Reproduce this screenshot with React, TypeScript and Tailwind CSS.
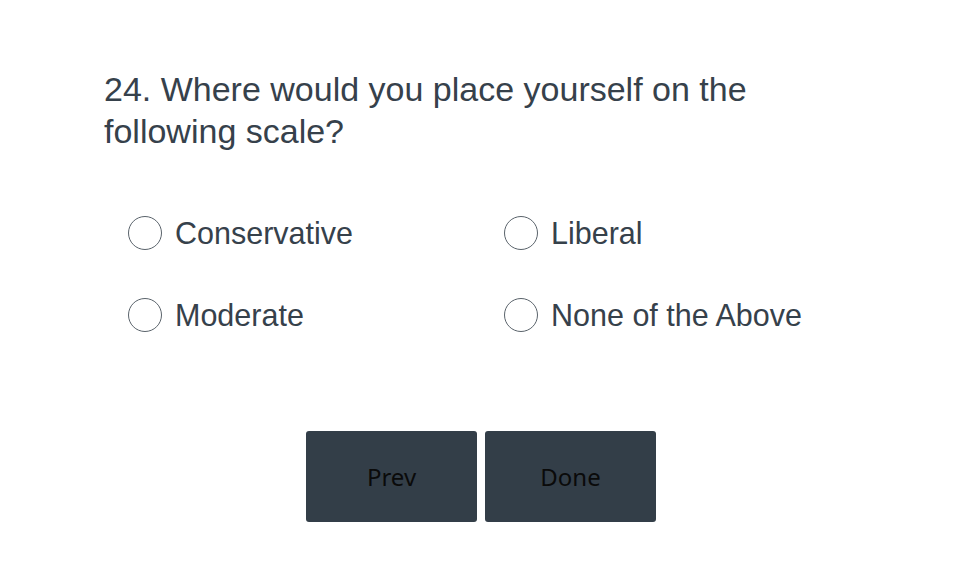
import React from "react";

const options = ["Conservative", "Liberal", "Moderate", "None of the Above"];

export default function App() {
  return (
    <div className="w-[958px] h-[574px] bg-white text-[#36414b]" style={{ fontFamily: '"Liberation Sans", Arial, sans-serif' }}>
      <div className="pl-[104px] pt-[68px]">
        <h1 className="text-[34px] leading-[42px] font-normal w-[720px]">
          24. Where would you place yourself on the following scale?
        </h1>
        <div className="mt-[64px] ml-[24px] grid grid-cols-2 w-[752px] gap-y-[48px]">
          {options.map((o) => (
            <label key={o} className="flex items-center h-[34px] gap-[13px] cursor-pointer">
              <span className="w-[34px] h-[34px] rounded-full border-[1.5px] border-[#5a636b] bg-white shrink-0" />
              <span className="text-[30.5px] leading-[34px]">{o}</span>
            </label>
          ))}
        </div>
      </div>
      <div className="flex justify-center gap-[8px] mt-[99px] pl-[4px]">
        <button className="w-[171px] h-[91px] rounded-[3px] bg-[#333e48] text-[#0a0a0a] text-[24px] leading-[28px]" style={{ fontFamily: '"Noto Sans", sans-serif' }}>
          Prev
        </button>
        <button className="w-[171px] h-[91px] rounded-[3px] bg-[#333e48] text-[#0a0a0a] text-[24px] leading-[28px]" style={{ fontFamily: '"Noto Sans", sans-serif' }}>
          Done
        </button>
      </div>
    </div>
  );
}
